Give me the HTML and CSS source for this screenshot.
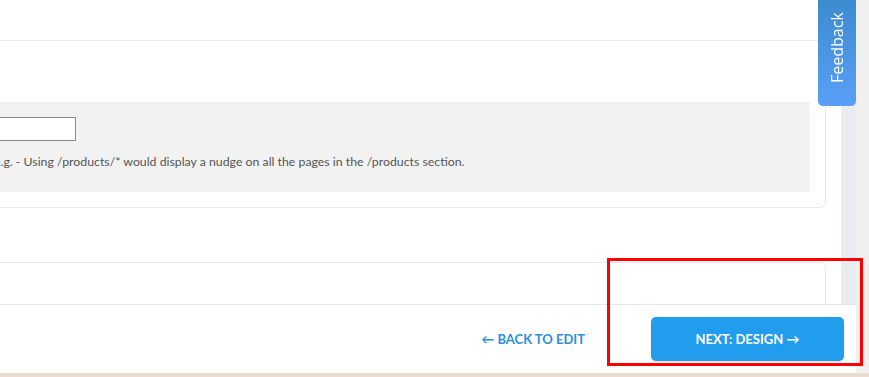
FILE: index.html
```html
<!DOCTYPE html>
<html lang="en">
<head>
    <meta charset="UTF-8">
    <title>Nudge targeting</title>
    <link rel="stylesheet" href="styles.css">
</head>
<body>
    <div class="layout">
        <main class="content">
            <div class="section-top"></div>

            <div class="card card-targeting">
                <div class="url-box">
                    <input class="url-input" type="text">
                    <p class="help">e.g. - Using /products/* would display a nudge on all the pages in the /products section.</p>
                </div>
            </div>

            <div class="card card-next"></div>
        </main>
        <div class="side-strip"></div>
        <div class="scroll-track"></div>
    </div>

    <button class="feedback-tab">Feedback</button>

    <footer class="action-bar">
        <a class="back-link" href="#">&larr; BACK TO EDIT</a>
        <button class="next-btn">NEXT: DESIGN &rarr;</button>
    </footer>

    <div class="bottom-edge"></div>

    <!-- annotation box from the screenshot -->
    <div class="highlight"></div>
</body>
</html>
```

FILE: styles.css
```css
* {
    margin: 0;
    padding: 0;
    box-sizing: border-box;
}

html, body {
    height: 100%;
    overflow: hidden;
}

body {
    font-family: 'Lato', 'Liberation Sans', sans-serif;
    background: #f0f0f0;
}

.layout {
    display: flex;
    height: 100%;
}

.content {
    width: 841px;
    background: #fff;
    overflow: hidden;
}

.side-strip {
    width: 15px;
    background: #e9ecf0;
}

.scroll-track {
    flex: 1;
    background: #f0f0f0;
}

.section-top {
    height: 40px;
}

/* cards */
.card {
    margin-left: -40px;
    margin-right: 15px;
    border: 1px solid #e6e8eb;
    background: #fff;
}

.card-targeting {
    padding: 61px 15px 15px 33px;
    border-radius: 0 0 6px 0;
}

.card-next {
    margin-top: 54px;
    height: 200px;
    border-radius: 0 6px 0 0;
}

.url-box {
    background: #f2f2f2;
    height: 90px;
    padding-top: 15px;
}

.url-input {
    display: block;
    margin-left: -60px;
    width: 142px;
    height: 24px;
    border: 1px solid #8a8a8a;
    background: #fff;
}

.help {
    margin-top: 13px;
    font-size: 12.3px;
    color: #555;
}

/* feedback tab */
.feedback-tab {
    position: fixed;
    top: 0;
    left: 818px;
    width: 38px;
    height: 106px;
    padding-top: 10px;
    border: none;
    border-radius: 5px 5px 0 0;
    background: linear-gradient(#5a9ff8, #3d8bcf);
    color: #fff;
    font-family: 'Open Sans', sans-serif;
    font-size: 16px;
    writing-mode: vertical-rl;
    transform: rotate(180deg);
}

/* bottom bar */
.action-bar {
    position: fixed;
    left: 0;
    bottom: 4px;
    width: 856px;
    height: 69px;
    background: #fff;
    border-top: 1px solid #e4e6e9;
    display: flex;
    justify-content: flex-end;
    align-items: center;
    gap: 66px;
    padding-right: 12px;
}

.back-link {
    color: #2a90d9;
    font-weight: 700;
    font-size: 13px;
    text-decoration: none;
}

.next-btn {
    width: 193px;
    height: 44px;
    border: none;
    border-radius: 5px;
    background: #229ded;
    color: #fff;
    font-family: inherit;
    font-weight: 700;
    font-size: 13px;
    box-shadow: 0 1px 2px rgba(0,0,0,0.15);
}

.bottom-edge {
    position: fixed;
    left: 0;
    right: 0;
    bottom: 0;
    height: 4px;
    background: #ecdcd0;
}

.highlight {
    position: fixed;
    left: 607px;
    top: 258px;
    width: 256px;
    height: 108px;
    border: 3px solid #f00;
}
```
